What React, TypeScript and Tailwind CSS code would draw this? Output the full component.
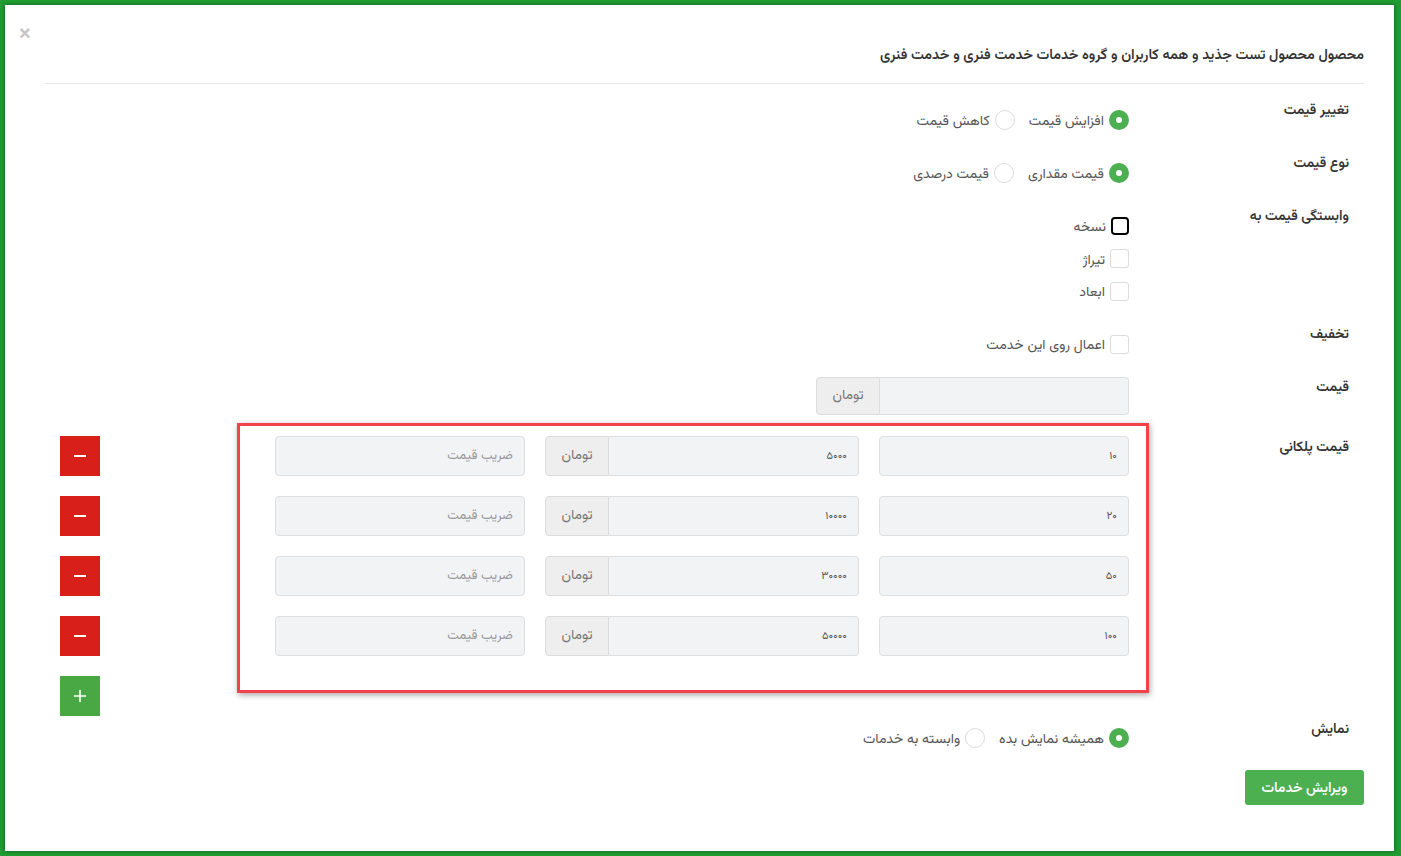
import React from 'react';

const font = { fontFamily: '"Vazirmatn", "Noto Sans Arabic", "DejaVu Sans", sans-serif' };

const Radio = ({ checked, label }: { checked?: boolean; label: string }) => (
  <div className="flex items-center gap-[5px]">
    {checked ? (
      <span className="w-[20px] h-[20px] rounded-full bg-[#4caf50] flex items-center justify-center">
        <span className="w-[6px] h-[6px] rounded-full bg-white" />
      </span>
    ) : (
      <span className="w-[20px] h-[20px] rounded-full bg-white border border-[#dcdcdc]" />
    )}
    <span className="text-[14px] h-[20px] leading-[24px] text-[#555]">{label}</span>
  </div>
);

const Check = ({ focused, label }: { focused?: boolean; label: string }) => (
  <div className="flex items-center gap-[5px] h-[20px]">
    {focused ? (
      <span className="w-[18px] h-[18px] rounded-[4px] border-2 border-black bg-white" />
    ) : (
      <span className="w-[19px] h-[19px] rounded-[3px] border border-[#dcdcdc] bg-white" />
    )}
    <span className="text-[14px] h-[20px] leading-[24px] text-[#555]">{label}</span>
  </div>
);

const Label = ({ children }: { children: React.ReactNode }) => (
  <div className="w-[200px] shrink-0 text-[14px] leading-[20px] font-semibold text-[#333] mt-[3px]">{children}</div>
);

const inputCls =
  'h-[40px] rounded-[4px] border border-[#dedede] bg-[#f2f3f5] px-[11px] text-[11px] text-[#555] outline-none placeholder:text-[#999] placeholder:text-[13px]';

const MoneyGroup = ({ value, w, h = 40 }: { value: string; w: number; h?: number }) => (
  <div className="flex" style={{ width: w }}>
    <input
      readOnly
      value={value}
      className={`flex-1 min-w-0 rounded-l-none border-l-0 ${inputCls}`}
      style={{ height: h }}
    />
    <span
      className="w-[64px] shrink-0 flex items-center justify-center bg-[#eeeeee] border border-[#dcdcdc] rounded-l-[4px] text-[14px] font-normal text-[#777]"
      style={{ height: h }}
    >
      تومان
    </span>
  </div>
);

const tiers = [
  { count: '۱۰', price: '۵۰۰۰' },
  { count: '۲۰', price: '۱۰۰۰۰' },
  { count: '۵۰', price: '۳۰۰۰۰' },
  { count: '۱۰۰', price: '۵۰۰۰۰' },
];

export default function App() {
  return (
    <div className="w-[1401px] h-[856px] bg-[#1f9c32] pt-[5px] pl-[5px] pr-[7px] pb-[5px]" style={font}>
      <div dir="rtl" className="relative h-[846px] bg-white shadow-[0_0_4px_rgba(0,0,0,0.45)] pr-[30px] pl-[40px] pt-[41px]">
        <button className="absolute left-[14px] top-[18px] text-[20px] leading-[20px] text-[#c4c4c4] font-bold" style={{ fontFamily: '"Liberation Sans", sans-serif' }}>
          ×
        </button>

        <div className="pb-[17px] border-b border-[#e5e5e5]">
          <h4 className="text-[14.3px] leading-[20px] font-semibold text-[#333]">
            محصول محصول تست جذید و همه کاربران و گروه خدمات خدمت فنری و خدمت فنری
          </h4>
        </div>

        <div className="px-[15px] pt-[14px]">
          <div className="flex h-[53px]">
            <Label>تغییر قیمت</Label>
            <div className="flex-1 pr-[20px] pt-[12px]">
              <div className="flex gap-[14px]">
                <Radio checked label="افزایش قیمت" />
                <Radio label="کاهش قیمت" />
              </div>
            </div>
          </div>

          <div className="flex h-[53px]">
            <Label>نوع قیمت</Label>
            <div className="flex-1 pr-[20px] pt-[12px]">
              <div className="flex gap-[14px]">
                <Radio checked label="قیمت مقداری" />
                <Radio label="قیمت درصدی" />
              </div>
            </div>
          </div>

          <div className="flex h-[118px]">
            <Label>وابستگی قیمت به</Label>
            <div className="flex-1 pr-[20px] pt-[12px] flex flex-col gap-[12.5px]">
              <Check focused label="نسخه" />
              <Check label="تیراژ" />
              <Check label="ابعاد" />
            </div>
          </div>

          <div className="flex h-[53px]">
            <Label>تخفیف</Label>
            <div className="flex-1 pr-[20px] pt-[12px]">
              <Check label="اعمال روی این خدمت" />
            </div>
          </div>

          <div className="flex h-[60px]">
            <Label>قیمت</Label>
            <div className="flex-1 pr-[20px] pt-[2px]">
              <MoneyGroup value="" w={313} h={38} />
            </div>
          </div>

          <div className="flex">
            <Label>قیمت پلکانی</Label>
            <div className="relative flex-1 pr-[20px] pt-[1px]">
              <div className="flex flex-col gap-[20px]">
                {tiers.map((t) => (
                  <div key={t.count} className="flex items-center gap-[20px]">
                    <input readOnly value={t.count} className={`w-[250px] ${inputCls}`} />
                    <MoneyGroup value={t.price} w={314} />
                    <input readOnly placeholder="ضریب قیمت" className={`w-[250px] ${inputCls}`} />
                    <button className="mr-auto w-[40px] h-[40px] bg-[#d91f1a] flex items-center justify-center">
                      <span className="w-[12px] h-[1.5px] bg-white" />
                    </button>
                  </div>
                ))}
                <div className="flex">
                  <button className="mr-auto w-[40px] h-[40px] bg-[#49a843] flex items-center justify-center">
                    <svg width="14" height="14" viewBox="0 0 14 14">
                      <path d="M7 1v12M1 7h12" stroke="white" strokeWidth="1.6" />
                    </svg>
                  </button>
                </div>
              </div>
              <div className="pointer-events-none absolute right-0 top-[-12px] w-[912px] h-[270px] border-[3px] border-[#f2434a] shadow-[1px_2px_6px_rgba(0,0,0,0.35)]" />
            </div>
          </div>

          <div className="flex h-[53px] mt-[1px]">
            <Label>نمایش</Label>
            <div className="flex-1 pr-[20px] pt-[11px]">
              <div className="flex gap-[14px]">
                <Radio checked label="همیشه نمایش بده" />
                <Radio label="وابسته به خدمات" />
              </div>
            </div>
          </div>
        </div>

        <div className="flex">
          <button className="w-[119px] h-[35px] rounded-[3px] bg-[#4caf50] text-white text-[14px] font-semibold pt-[3px]">
            ویرایش خدمات
          </button>
        </div>
      </div>
    </div>
  );
}
